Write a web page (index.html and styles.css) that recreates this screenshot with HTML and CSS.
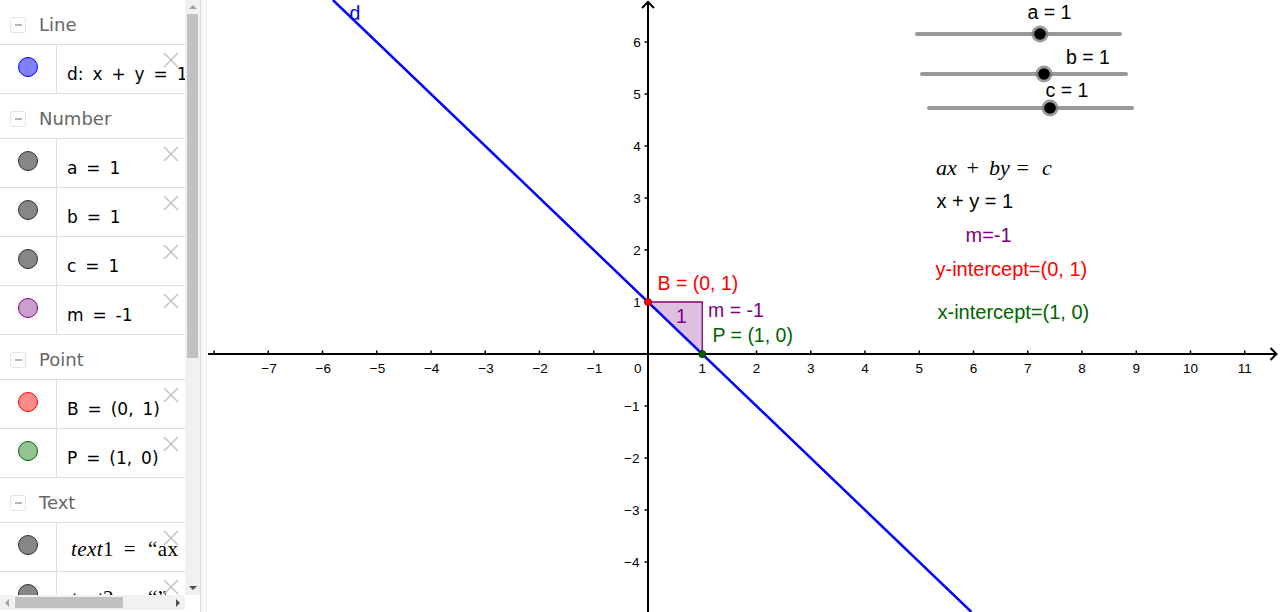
FILE: index.html
```html
<!DOCTYPE html>
<html>
<head>
<meta charset="utf-8">
<title>Graphing ax + by = c</title>
<link rel="stylesheet" href="styles.css">
</head>
<body>
<div class="app">
  <div class="algebra">
    <div class="av-viewport">
      <div class="av-list">
        <div class="group"><span class="toggle"></span><span class="group-title">Line</span></div>
        <div class="item">
          <div class="marble-cell"><span class="marble mb-blue"></span></div>
          <div class="formula">d: x + y = 1</div>
          <svg class="del" viewBox="0 0 16 16"><path d="M1 1L15 15M15 1L1 15"/></svg>
        </div>
        <div class="group"><span class="toggle"></span><span class="group-title">Number</span></div>
        <div class="item">
          <div class="marble-cell"><span class="marble mb-gray"></span></div>
          <div class="formula">a = 1</div>
          <svg class="del" viewBox="0 0 16 16"><path d="M1 1L15 15M15 1L1 15"/></svg>
        </div>
        <div class="item">
          <div class="marble-cell"><span class="marble mb-gray"></span></div>
          <div class="formula">b = 1</div>
          <svg class="del" viewBox="0 0 16 16"><path d="M1 1L15 15M15 1L1 15"/></svg>
        </div>
        <div class="item">
          <div class="marble-cell"><span class="marble mb-gray"></span></div>
          <div class="formula">c = 1</div>
          <svg class="del" viewBox="0 0 16 16"><path d="M1 1L15 15M15 1L1 15"/></svg>
        </div>
        <div class="item">
          <div class="marble-cell"><span class="marble mb-purple"></span></div>
          <div class="formula">m = -1</div>
          <svg class="del" viewBox="0 0 16 16"><path d="M1 1L15 15M15 1L1 15"/></svg>
        </div>
        <div class="group"><span class="toggle"></span><span class="group-title">Point</span></div>
        <div class="item">
          <div class="marble-cell"><span class="marble mb-red"></span></div>
          <div class="formula">B = (0, 1)</div>
          <svg class="del" viewBox="0 0 16 16"><path d="M1 1L15 15M15 1L1 15"/></svg>
        </div>
        <div class="item">
          <div class="marble-cell"><span class="marble mb-green"></span></div>
          <div class="formula">P = (1, 0)</div>
          <svg class="del" viewBox="0 0 16 16"><path d="M1 1L15 15M15 1L1 15"/></svg>
        </div>
        <div class="group"><span class="toggle"></span><span class="group-title">Text</span></div>
        <div class="item">
          <div class="marble-cell"><span class="marble mb-gray"></span></div>
          <div class="formula serif"><i>text</i>1<span class="rel">=</span>“ax + by = c”</div>
          <svg class="del" viewBox="0 0 16 16"><path d="M1 1L15 15M15 1L1 15"/></svg>
        </div>
        <div class="item">
          <div class="marble-cell"><span class="marble mb-gray"></span></div>
          <div class="formula serif"><i>text</i>2<span class="rel">=</span>“”</div>
          <svg class="del" viewBox="0 0 16 16"><path d="M1 1L15 15M15 1L1 15"/></svg>
        </div>
      </div>
    </div>
    <div class="vscroll">
      <span class="sb-btn"><span class="tri tri-up"></span></span>
      <span class="vthumb"></span>
      <span class="sb-fill"></span>
      <span class="sb-btn"><span class="tri tri-down"></span></span>
    </div>
    <div class="hscroll">
      <span class="sb-btn"><span class="tri tri-left"></span></span>
      <span class="hthumb"></span>
      <span class="sb-fill"></span>
      <span class="sb-btn"><span class="tri tri-right"></span></span>
    </div>
    <div class="corner"></div>
    <div class="foot"></div>
    <div class="foot"></div>
  </div>
  <div class="splitter"></div>
  <div class="graphics">
    <svg class="plot" width="1073" height="612" viewBox="207 0 1073 612">
      <!-- slope triangle -->
      <polygon class="tri-fill" points="648,302 702.25,302 702.25,354"/>
      <!-- axes -->
      <path class="axis" d="M208 354H1276M648 2V612"/>
      <path class="axis" d="M642 8L648 2L654 8M1270.5 348L1276.5 354L1270.5 360"/>
      <path class="ticks" d="M214 350.5V354M268.25 350.5V354M322.5 350.5V354M376.75 350.5V354M431 350.5V354M485.25 350.5V354M539.5 350.5V354M593.75 350.5V354M702.25 350.5V354M756.5 350.5V354M810.75 350.5V354M865 350.5V354M919.25 350.5V354M973.5 350.5V354M1027.75 350.5V354M1082 350.5V354M1136.25 350.5V354M1190.5 350.5V354M1244.75 350.5V354M644.5 42H648M644.5 94H648M644.5 146H648M644.5 198H648M644.5 250H648M644.5 302H648M644.5 406H648M644.5 458H648M644.5 510H648M644.5 562H648"/>
      <g class="tick-x">
        <text x="269" y="373">−7</text>
        <text x="323.3" y="373">−6</text>
        <text x="377.5" y="373">−5</text>
        <text x="431.7" y="373">−4</text>
        <text x="486" y="373">−3</text>
        <text x="540.2" y="373">−2</text>
        <text x="594.5" y="373">−1</text>
        <text x="702.25" y="373">1</text>
        <text x="756.5" y="373">2</text>
        <text x="810.75" y="373">3</text>
        <text x="865" y="373">4</text>
        <text x="919.25" y="373">5</text>
        <text x="973.5" y="373">6</text>
        <text x="1027.75" y="373">7</text>
        <text x="1082" y="373">8</text>
        <text x="1136.25" y="373">9</text>
        <text x="1190.5" y="373">10</text>
        <text x="1244.75" y="373">11</text>
      </g>
      <text class="tick-o" x="637.7" y="373">0</text>
      <g class="tick-y">
        <text x="640.7" y="46.8">6</text>
        <text x="640.7" y="98.8">5</text>
        <text x="640.7" y="150.8">4</text>
        <text x="640.7" y="202.8">3</text>
        <text x="640.7" y="254.8">2</text>
        <text x="640.7" y="306.8">1</text>
        <text x="639.5" y="410.5">−1</text>
        <text x="639.5" y="462.5">−2</text>
        <text x="639.5" y="514.5">−3</text>
        <text x="639.5" y="566.5">−4</text>
      </g>
      <!-- line d -->
      <line class="line-d" x1="332.9" y1="0" x2="971.4" y2="612"/>
      <text class="lbl c-blue" x="349.5" y="20">d</text>
      <!-- points -->
      <circle class="pt-red" cx="648" cy="302" r="3.5"/>
      <circle class="pt-green" cx="702.25" cy="354" r="3.5"/>
      <text class="lbl c-red" x="657.5" y="290">B = (0, 1)</text>
      <text class="lbl c-green" x="712.5" y="341.5">P = (1, 0)</text>
      <text class="lbl c-purple" x="676" y="323">1</text>
      <text class="lbl c-purple" x="708" y="317">m = -1</text>
      <!-- sliders -->
      <path class="slider" d="M917 34H1120M922 74H1126M929 108H1132"/>
      <circle class="knob-ring" cx="1040" cy="34" r="8.5"/>
      <circle class="knob" cx="1040" cy="34" r="5.8"/>
      <circle class="knob-ring" cx="1044" cy="74" r="8.5"/>
      <circle class="knob" cx="1044" cy="74" r="5.8"/>
      <circle class="knob-ring" cx="1050" cy="108" r="8.5"/>
      <circle class="knob" cx="1050" cy="108" r="5.8"/>
      <text class="lbl" x="1027.5" y="18.5">a = 1</text>
      <text class="lbl" x="1066" y="64">b = 1</text>
      <text class="lbl" x="1045.5" y="97">c = 1</text>
      <!-- texts -->
      <text class="math"><tspan class="mi" x="936" y="175">ax</tspan><tspan x="966.5" y="175">+</tspan><tspan class="mi" x="989" y="175">by</tspan><tspan x="1016.5" y="175">=</tspan><tspan class="mi" x="1042" y="175">c</tspan></text>
      <text class="lbl big" x="936.5" y="208">x + y = 1</text>
      <text class="lbl big c-purple" x="965.5" y="242">m=-1</text>
      <text class="lbl big c-red" x="935.5" y="276">y-intercept=(0, 1)</text>
      <text class="lbl big c-green" x="937.5" y="318.5">x-intercept=(1, 0)</text>
    </svg>
  </div>
</div>
</body>
</html>
```

FILE: styles.css
```css
* { box-sizing: border-box; }
html, body { margin: 0; padding: 0; }
body {
  width: 1280px;
  height: 612px;
  overflow: hidden;
  background: #ffffff;
  font-family: "DejaVu Sans", "Noto Sans", sans-serif;
}
.app {
  display: flex;
  width: 1280px;
  height: 612px;
}

/* ---------- algebra view ---------- */
.algebra {
  width: 200px;
  flex: none;
  display: grid;
  grid-template-columns: 185px 15px;
  grid-template-rows: 595px 15px 2px;
  background: #ffffff;
}
.av-viewport {
  overflow: hidden;
}
.av-list {
  width: 185px;
}
.group {
  height: 45px;
  border-bottom: 1px solid #dedede;
  display: flex;
  align-items: center;
  padding-top: 6px;
  padding-left: 10px;
}
.toggle {
  width: 16px;
  height: 16px;
  border: 1px solid #e3e3e3;
  border-radius: 3px;
  flex: none;
  display: flex;
  align-items: center;
  justify-content: center;
}
.toggle::after {
  content: "";
  width: 7px;
  height: 1.5px;
  background: #b5b5b5;
}
.group-title {
  margin-left: 13px;
  font-size: 18px;
  line-height: 22px;
  color: #666666;
}
.item {
  height: 49px;
  border-bottom: 1px solid #dedede;
  display: flex;
  position: relative;
  overflow: hidden;
}
.marble-cell {
  width: 57px;
  flex: none;
  border-right: 1px solid #dedede;
  padding-top: 12px;
  display: flex;
  justify-content: center;
  align-items: flex-start;
}
.marble {
  width: 20px;
  height: 20px;
  border-radius: 50%;
  border: 1px solid #333;
}
.mb-blue { background: #8080ff; border-color: #0000ff; }
.mb-gray { background: #868686; border-color: #2e2e2e; }
.mb-purple { background: #c99fcc; border-color: #800080; }
.mb-red { background: #ff8a8a; border-color: #ff0000; }
.mb-green { background: #93c293; border-color: #006400; }
.formula {
  padding: 19px 0 0 10px;
  font-size: 17px;
  line-height: 20px;
  white-space: nowrap;
  word-spacing: 3.5px;
  color: #000000;
}
.formula.serif {
  font-family: "Liberation Serif", "DejaVu Serif", serif;
  font-size: 21px;
  line-height: 24px;
  padding-top: 14px;
  padding-left: 14px;
  word-spacing: 0;
  letter-spacing: 0.4px;
}
.formula.serif i {
  font-style: italic;
}
.rel {
  margin: 0 12px 0 10px;
}
.del {
  position: absolute;
  left: 163px;
  top: 7px;
  width: 16px;
  height: 16px;
}
.del path {
  stroke: #c6c6c6;
  stroke-width: 1.6;
  fill: none;
}

/* scrollbars */
.vscroll {
  background: #f1f1f1;
  display: flex;
  flex-direction: column;
  align-items: center;
}
.hscroll {
  background: #f1f1f1;
  display: flex;
  align-items: center;
}
.sb-btn {
  width: 14px;
  height: 14px;
  flex: none;
  display: flex;
  align-items: center;
  justify-content: center;
}
.sb-fill { flex: 1; }
.vthumb {
  width: 11px;
  height: 344px;
  flex: none;
  background: #c1c1c1;
}
.hthumb {
  width: 108px;
  height: 11px;
  flex: none;
  margin-left: 1px;
  background: #c1c1c1;
}
.tri { width: 0; height: 0; }
.tri-up {
  border-left: 4px solid transparent;
  border-right: 4px solid transparent;
  border-bottom: 4px solid #a3a3a3;
}
.tri-down {
  border-left: 4px solid transparent;
  border-right: 4px solid transparent;
  border-top: 4px solid #505050;
}
.tri-left {
  border-top: 4px solid transparent;
  border-bottom: 4px solid transparent;
  border-right: 4px solid #a3a3a3;
}
.tri-right {
  border-top: 4px solid transparent;
  border-bottom: 4px solid transparent;
  border-left: 4px solid #505050;
}
.corner { background: #ffffff; }
.foot { background: #ffffff; }

.splitter {
  width: 7px;
  flex: none;
  background: #f9f9f9;
  border-left: 1px solid #dcdcdc;
  border-right: 1px solid #ececec;
}

/* ---------- graphics view ---------- */
.graphics {
  flex: 1;
  background: #ffffff;
  overflow: hidden;
}
.plot {
  display: block;
}
.plot text {
  font-family: "Liberation Sans", Arial, sans-serif;
}
.tri-fill {
  fill: #800080;
  fill-opacity: 0.25;
  stroke: #800080;
  stroke-width: 1.3;
}
.axis {
  stroke: #000000;
  stroke-width: 2;
  fill: none;
}
.ticks {
  stroke: #000000;
  stroke-width: 1.5;
  fill: none;
}
.tick-x text, .tick-o {
  font-size: 13.5px;
  text-anchor: middle;
  fill: #000000;
}
.tick-y text {
  font-size: 13.5px;
  text-anchor: end;
  fill: #000000;
}
.line-d {
  stroke: #0000ff;
  stroke-width: 2.5;
}
.pt-red { fill: #ff0000; stroke: #b00000; stroke-width: 1; }
.pt-green { fill: #006400; stroke: #003300; stroke-width: 1; }
.lbl {
  font-size: 19.5px;
  fill: #000000;
}
.lbl.big {
  font-size: 20px;
}
.c-blue { fill: #0000ff; }
.c-red { fill: #ff0000; }
.c-green { fill: #006400; }
.c-purple { fill: #800080; }
.slider {
  stroke: #999999;
  stroke-width: 4;
  stroke-linecap: round;
  fill: none;
}
.knob-ring { fill: #7a7a7a; fill-opacity: 0.75; }
.knob { fill: #000000; }
.plot .math {
  font-family: "Liberation Serif", "DejaVu Serif", serif;
  font-size: 22px;
  fill: #000000;
}
.math .mi { font-style: italic; }
```
